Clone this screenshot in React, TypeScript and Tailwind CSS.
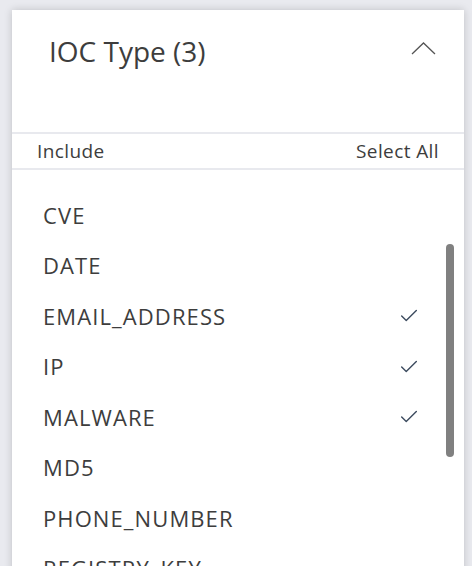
import { Check } from 'lucide-react';

const iocTypes = [
  { name: 'CVE', checked: false },
  { name: 'DATE', checked: false },
  { name: 'EMAIL_ADDRESS', checked: true },
  { name: 'IP', checked: true },
  { name: 'MALWARE', checked: true },
  { name: 'MD5', checked: false },
  { name: 'PHONE_NUMBER', checked: false },
  { name: 'REGISTRY_KEY', checked: false },
  { name: 'SHA1', checked: false },
];

export default function App() {
  return (
    <div
      className="h-[566px] overflow-hidden bg-[#e9eaef] pt-[10px] pl-[12px] pr-[8px]"
      style={{ fontFamily: '"Open Sans", "Noto Sans", sans-serif' }}
    >
      <div className="relative h-[600px] bg-white text-[#3d3d3d] shadow-[0_0_8px_rgba(0,0,0,0.18)]">
        <div className="flex h-[122px] items-start justify-between pl-[37px] pr-[28px] pt-[20px]">
          <h1 className="text-[28px] leading-[42px]">IOC Type (3)</h1>
          <svg className="mt-[12px]" width="25" height="13" viewBox="0 0 25 13" fill="none">
            <polyline points="1,12 12.5,1 24,12" stroke="#555" strokeWidth="1.3" />
          </svg>
        </div>
        <div className="flex h-[38px] items-center justify-between border-y-2 border-[#e8e9ee] px-[25px] text-[19px] tracking-[0.4px]">
          <span>Include</span>
          <span>Select All</span>
        </div>
        <ul className="pt-[20px]">
          {iocTypes.map((t) => (
            <li key={t.name} className="flex h-[50.5px] items-center justify-between pl-[31px] pr-[44px] text-[22px] tracking-[1.1px]">
              <span>{t.name}</span>
              {t.checked && <Check className="h-[22px] w-[22px] text-[#3b4a5e]" strokeWidth={1.5} />}
            </li>
          ))}
        </ul>
        <div className="absolute left-[434px] top-[234px] h-[213px] w-[8px] rounded-full bg-[#808080]" />
      </div>
    </div>
  );
}
